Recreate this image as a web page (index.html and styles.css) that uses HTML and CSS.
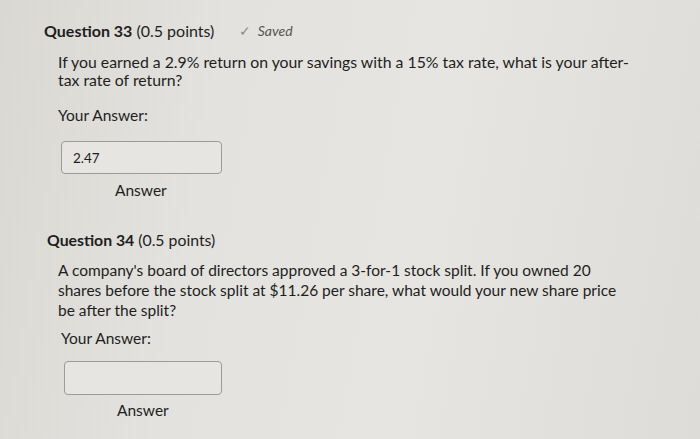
FILE: index.html
```html
<!DOCTYPE html>
<html lang="en">
<head>
  <meta charset="UTF-8">
  <title>Quiz</title>
  <link rel="stylesheet" href="styles.css">
</head>
<body>
  <main class="quiz">
    <!-- Question 33 -->
    <section class="question q33">
      <h2 class="q-title">
        <strong>Question 33</strong> (0.5 points)
        <span class="saved"><span class="tick">&#10003;</span> Saved</span>
      </h2>
      <div class="q-body">
        <p class="q-text">If you earned a 2.9% return on your savings with a 15% tax rate, what is your after-tax rate of return?</p>
        <p class="label">Your Answer:</p>
        <div class="answer-box">2.47</div>
        <div class="answer-caption">Answer</div>
      </div>
    </section>

    <!-- Question 34 -->
    <section class="question q34">
      <h2 class="q-title"><strong>Question 34</strong> (0.5 points)</h2>
      <div class="q-body">
        <p class="q-text">A company's board of directors approved a 3-for-1 stock split. If you owned 20 shares before the stock split at $11.26 per share, what would your new share price be after the split?</p>
        <p class="label">Your Answer:</p>
        <div class="answer-box"></div>
        <div class="answer-caption">Answer</div>
      </div>
    </section>
  </main>
</body>
</html>
```

FILE: styles.css
```css
/* page */
body {
  margin: 0;
  height: 439px;
  overflow: hidden;
  background: linear-gradient(100deg, #d9d8d3 0%, #e3e2de 30%, #e6e5e1 60%, #dedcd8 100%);
  font-family: Lato, "Open Sans", sans-serif;
  color: #1e1e1e;
}

.quiz {
  padding: 21px 0 0 44px;
}

/* question header */
.q-title {
  margin: 0;
  font-size: 16px;
  line-height: 20px;
  font-weight: normal;
  display: flex;
  align-items: center;
}

.q-title strong {
  font-weight: bold;
  margin-right: 4px;
}

.saved {
  margin-left: 25px;
  font-size: 14px;
  font-style: italic;
  color: #555;
}

.saved .tick {
  font-style: normal;
  color: #8a8a8a;
  margin-right: 3px;
}

/* question body */
.q-body {
  padding-left: 14px;
}

.q-text {
  margin: 12px 0 0;
  width: 580px;
  font-size: 15.8px;
  line-height: 18px;
}

.label {
  margin: 16px 0 0;
  font-size: 15.5px;
  line-height: 20px;
}

.answer-box {
  margin: 16px 0 0 3px;
  width: 161px;
  height: 33px;
  box-sizing: border-box;
  border: 1px solid #9c9b98;
  border-radius: 4px;
  background: #e6e5e1;
  padding: 8px 0 0 11px;
  font-size: 13.5px;
  line-height: 16px;
}

.answer-caption {
  margin: 7px 0 0 57px;
  font-size: 15.5px;
  line-height: 18px;
}

/* second question, slightly different scale in the photo */
.q34 {
  margin-top: 31px;
  padding-left: 3px;
}

.q34 .q-title {
  font-size: 15.8px;
}

.q34 .q-body {
  padding-left: 11px;
}

.q34 .q-text {
  margin-top: 10px;
  width: 566px;
  line-height: 20px;
  font-size: 15.5px;
}

.q34 .label {
  margin-top: 8px;
  padding-left: 3px;
}

.q34 .answer-box {
  margin-left: 6px;
  width: 158px;
  height: 34px;
  margin-top: 13px;
}

.q34 .answer-caption {
  margin-left: 59px;
  margin-top: 6px;
}
```
